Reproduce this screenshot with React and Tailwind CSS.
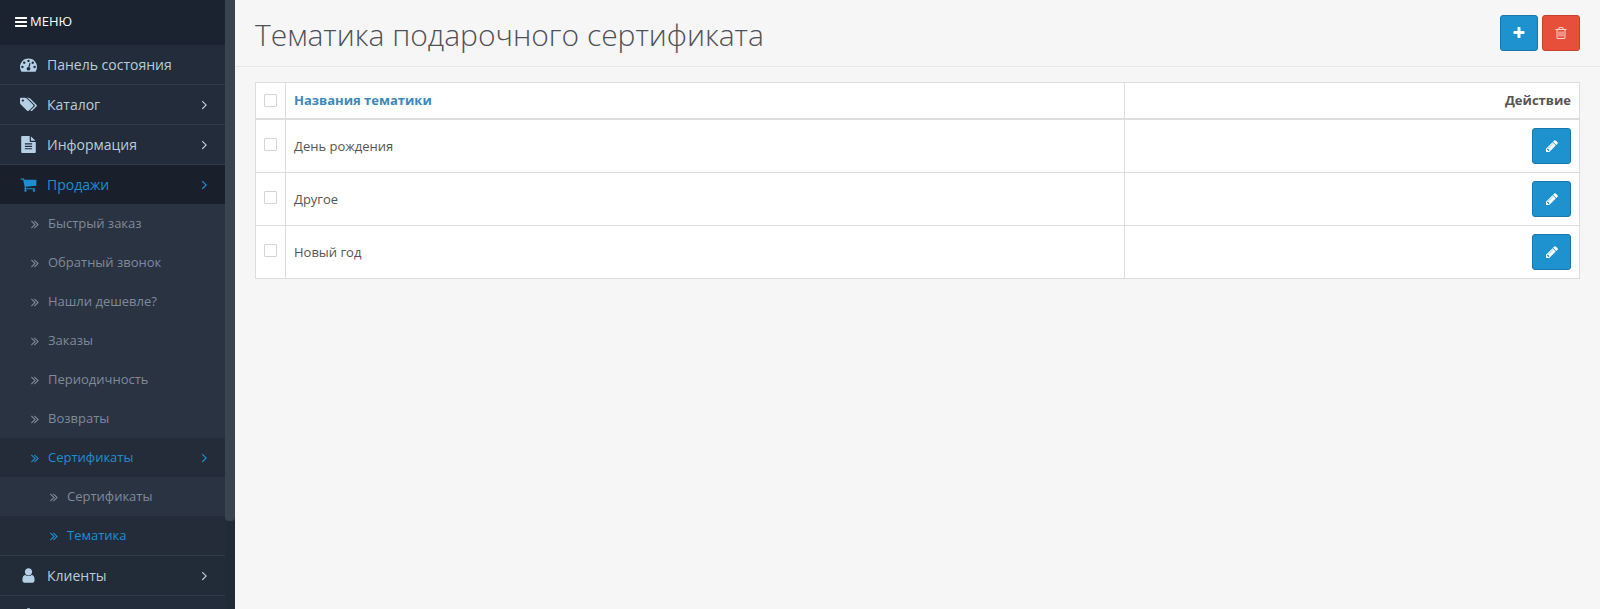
const paths = {
  bars: "M1664 1344v128q0 26-19 45t-45 19h-1408q-26 0-45-19t-19-45v-128q0-26 19-45t45-19h1408q26 0 45 19t19 45zm0-512v128q0 26-19 45t-45 19h-1408q-26 0-45-19t-19-45v-128q0-26 19-45t45-19h1408q26 0 45 19t19 45zm0-512v128q0 26-19 45t-45 19h-1408q-26 0-45-19t-19-45v-128q0-26 19-45t45-19h1408q26 0 45 19t19 45z",
  dashboard: "M384 1152q0-53-37.5-90.5t-90.5-37.5-90.5 37.5-37.5 90.5 37.5 90.5 90.5 37.5 90.5-37.5 37.5-90.5zm192-448q0-53-37.5-90.5t-90.5-37.5-90.5 37.5-37.5 90.5 37.5 90.5 90.5 37.5 90.5-37.5 37.5-90.5zm428 481l101-382q6-26-7.5-48.5t-38.5-29.5-48 6.5-30 39.5l-101 382q-60 5-107 43.5t-63 98.5q-20 77 20 146t117 89 146-20 89-117q16-60-6-117t-72-91zm660-33q0-53-37.5-90.5t-90.5-37.5-90.5 37.5-37.5 90.5 37.5 90.5 90.5 37.5 90.5-37.5 37.5-90.5zm-640-640q0-53-37.5-90.5t-90.5-37.5-90.5 37.5-37.5 90.5 37.5 90.5 90.5 37.5 90.5-37.5 37.5-90.5zm448 192q0-53-37.5-90.5t-90.5-37.5-90.5 37.5-37.5 90.5 37.5 90.5 90.5 37.5 90.5-37.5 37.5-90.5zm320 448q0 261-141 483-19 29-54 29h-1402q-35 0-54-29-141-221-141-483 0-182 71-348t191-286 286-191 348-71 348 71 286 191 191 286 71 348z",
  tags: "M448 448q0-53-37.5-90.5t-90.5-37.5-90.5 37.5-37.5 90.5 37.5 90.5 90.5 37.5 90.5-37.5 37.5-90.5zm1067 576q0 53-37 90l-491 492q-39 37-91 37-53 0-90-37l-715-716q-38-37-64.5-101t-26.5-117v-416q0-52 38-90t90-38h416q53 0 117 26.5t102 64.5l715 714q37 39 37 91zm384 0q0 53-37 90l-491 492q-39 37-91 37-36 0-59-14t-53-45l470-470q37-37 37-90 0-52-37-91l-715-714q-38-38-102-64.5t-117-26.5h224q53 0 117 26.5t102 64.5l715 714q37 39 37 91z",
  file: "M1596 476q14 14 28 36h-472v-472q22 14 36 28zm-476 164h544v1056q0 40-28 68t-68 28h-1344q-40 0-68-28t-28-68v-1600q0-40 28-68t68-28h800v544q0 40 28 68t68 28zm160 736v-64q0-14-9-23t-23-9h-704q-14 0-23 9t-9 23v64q0 14 9 23t23 9h704q14 0 23-9t9-23zm0-256v-64q0-14-9-23t-23-9h-704q-14 0-23 9t-9 23v64q0 14 9 23t23 9h704q14 0 23-9t9-23zm0-256v-64q0-14-9-23t-23-9h-704q-14 0-23 9t-9 23v64q0 14 9 23t23 9h704q14 0 23-9t9-23z",
  cart: "M704 1536q0 52-38 90t-90 38-90-38-38-90 38-90 90-38 90 38 38 90zm896 0q0 52-38 90t-90 38-90-38-38-90 38-90 90-38 90 38 38 90zm128-1088v512q0 24-16.5 42.5t-40.5 21.5l-1044 122q13 60 13 70 0 16-24 64h920q26 0 45 19t19 45-19 45-45 19h-1024q-26 0-45-19t-19-45q0-11 8-31.5t16-36 21.5-40 15.5-29.5l-177-823h-204q-26 0-45-19t-19-45 19-45 45-19h256q16 0 28.5 6.5t19.5 15.5 13 24.5 8 26 5.5 29.5 4.5 26h1201q26 0 45 19t19 45z",
  user: "M1536 1399q0 109-62.5 187t-150.5 78h-854q-88 0-150.5-78t-62.5-187q0-85 8.5-160.5t31.5-152 58.5-131 94-89 134.5-34.5q131 128 313 128t313-128q76 0 134.5 34.5t94 89 58.5 131 31.5 152 8.5 160.5zm-256-887q0 159-112.5 271.5t-271.5 112.5-271.5-112.5-112.5-271.5 112.5-271.5 271.5-112.5 271.5 112.5 112.5 271.5z",
  angle: "M1171 960q0 13-10 23l-466 466q-10 10-23 10t-23-10l-50-50q-10-10-10-23t10-23l393-393-393-393q-10-10-10-23t10-23l50-50q10-10 23-10t23 10l466 466q10 10 10 23z",
  angleDouble: "M979 960q0 13-10 23l-466 466q-10 10-23 10t-23-10l-50-50q-10-10-10-23t10-23l393-393-393-393q-10-10-10-23t10-23l50-50q10-10 23-10t23 10l466 466q10 10 10 23zm384 0q0 13-10 23l-466 466q-10 10-23 10t-23-10l-50-50q-10-10-10-23t10-23l393-393-393-393q-10-10-10-23t10-23l50-50q10-10 23-10t23 10l466 466q10 10 10 23z",
  pencil: "M491 1536l91-91-235-235-91 91v107h128v128h107zm523-928q0-22-22-22-10 0-17 7l-542 542q-7 7-7 17 0 22 22 22 10 0 17-7l542-542q7-7 7-17zm-54-192l416 416-832 832h-416v-416zm683 96q0 53-37 90l-166 166-416-416 166-165q36-38 90-38 53 0 91 38l235 234q37 39 37 91z",
  plus: "M1600 736v192q0 40-28 68t-68 28h-416v416q0 40-28 68t-68 28h-192q-40 0-68-28t-28-68v-416h-416q-40 0-68-28t-28-68v-192q0-40 28-68t68-28h416v-416q0-40 28-68t68-28h192q40 0 68 28t28 68v416h416q40 0 68 28t28 68z",
  trash: "M704 736v576q0 14-9 23t-23 9h-64q-14 0-23-9t-9-23v-576q0-14 9-23t23-9h64q14 0 23 9t9 23zm256 0v576q0 14-9 23t-23 9h-64q-14 0-23-9t-9-23v-576q0-14 9-23t23-9h64q14 0 23 9t9 23zm256 0v576q0 14-9 23t-23 9h-64q-14 0-23-9t-9-23v-576q0-14 9-23t23-9h64q14 0 23 9t9 23zm128 724v-948h-896v948q0 22 7 40.5t14.5 27 10.5 8.5h832q3 0 10.5-8.5t14.5-27 7-40.5zm-672-1076h448l-48-117q-7-9-17-11h-317q-10 2-17 11zm928 32v64q0 14-9 23t-23 9h-96v948q0 83-47 143.5t-113 60.5h-832q-66 0-113-58.5t-47-141.5v-952h-96q-14 0-23-9t-9-23v-64q0-14 9-23t23-9h309l70-167q15-37 54-63t79-26h320q40 0 79 26t54 63l70 167h309q14 0 23 9t9 23z",
  cog: "M1152 896q0-106-75-181t-181-75-181 75-75 181 75 181 181 75 181-75 75-181zm512-109v222q0 12-8 23t-20 13l-185 28q-19 54-39 91 35 50 107 138 10 12 10 25t-9 23q-27 37-99 108t-94 71q-12 0-26-9l-138-108q-44 23-91 38-16 136-29 186-7 28-36 28h-222q-14 0-24.5-8.5t-11.5-21.5l-28-184q-49-16-90-37l-141 107q-10 9-25 9-14 0-25-11-126-114-165-168-7-10-7-23 0-12 8-23 15-21 51-66.5t54-70.5q-27-50-41-99l-183-27q-13-2-21-12.5t-8-23.5v-222q0-12 8-23t19-13l186-28q14-46 39-92-40-57-107-138-10-12-10-24 0-10 9-23 26-36 98.5-107.5t94.5-71.5q13 0 26 10l138 107q44-23 91-38 16-136 29-186 7-28 36-28h222q14 0 24.5 8.5t11.5 21.5l28 184q49 16 90 37l142-107q9-9 24-9 13 0 25 10 129 119 165 170 7 8 7 22 0 12-8 23-15 21-51 66.5t-54 70.5q26 50 41 98l183 28q13 2 21 12.5t8 23.5z",
};

const Fa = ({ name, size = 14, box = "0 0 1792 1792", className = "" }) => (
  <svg viewBox={box} width={size} height={size} fill="currentColor" fillRule="evenodd" className={`shrink-0 ${className}`}>
    <path d={paths[name]} />
  </svg>
);

const MainItem = ({ icon, label, arrow, active, box, tall }) => (
  <div
    className={`flex items-center pl-[20px] pr-[13px] text-[14px] ${
      active
        ? "h-[39px] bg-[#19202b] text-[#1f8ed0]"
        : tall
          ? "h-[41px] border-y border-[#2f3a4a] bg-[#222b38] text-[#b9cdd9]"
          : "h-[40px] border-b border-[#2f3a4a] bg-[#232c3a] text-[#b9cdd9]"
    }`}
  >
    <span className={`w-[27px] ${active ? "text-[#1f8ed0]" : "text-[#b5d0e6]"}`}>
      <Fa name={icon} size={17} box={box} />
    </span>
    <span className="flex-1">{label}</span>
    {arrow && <Fa name="angle" size={15} />}
  </div>
);

const SubItem = ({ label, arrow, active, level = 1 }) => (
  <div
    className={`flex items-center h-[39px] pr-[13px] text-[13px] ${level === 2 ? "pl-[47px]" : "pl-[28px]"} ${
      active ? "text-[#1f8ed0]" : "text-[#7f8a99]"
    } ${active ? "bg-[#232c38]" : "bg-[#2a3342]"}`}
  >
    <Fa name="angleDouble" size={14} className="mr-[6px]" />
    <span className="flex-1">{label}</span>
    {arrow && <Fa name="angle" size={15} />}
  </div>
);

const rows = ["День рождения", "Другое", "Новый год"];

const Checkbox = () => <span className="block w-[13px] h-[13px] border border-[#d5d5d5] bg-white rounded-[1px]" />;

export default function App() {
  return (
    <div className="flex h-[609px] overflow-hidden bg-[#f6f6f6] font-['Open_Sans',sans-serif]">
      <aside className="flex w-[235px] shrink-0 bg-[#212a37]">
        <div className="w-[225px] shrink-0">
          <div className="flex items-center h-[45px] pl-[14px] pb-[1px] bg-[#1b2331] text-white text-[13px] gap-[2px]">
            <Fa name="bars" size={14} />
            МЕНЮ
          </div>
          <MainItem icon="dashboard" label="Панель состояния" />
          <MainItem icon="tags" box="0 0 1920 1792" label="Каталог" arrow />
          <MainItem icon="file" label="Информация" arrow />
          <MainItem icon="cart" label="Продажи" arrow active />
          <SubItem label="Быстрый заказ" />
          <SubItem label="Обратный звонок" />
          <SubItem label="Нашли дешевле?" />
          <SubItem label="Заказы" />
          <SubItem label="Периодичность" />
          <SubItem label="Возвраты" />
          <SubItem label="Сертификаты" arrow active />
          <SubItem label="Сертификаты" level={2} />
          <SubItem label="Тематика" level={2} active />
          <MainItem icon="user" label="Клиенты" arrow tall />
          <MainItem icon="cog" label="" />
        </div>
        <div className="w-[10px] h-[521px] bg-[#3a4350] rounded-b-[4px]" />
      </aside>
      <main className="flex-1 min-w-0">
        <header className="flex items-center justify-between h-[67px] pl-[20px] pr-[20px] border-b border-[#e8e8e8]">
          <h1 className="pt-[2px] text-[30px] font-light text-[#4d5159]">Тематика подарочного сертификата</h1>
          <div className="flex gap-[4px]">
            <button className="flex items-center justify-center w-[38px] h-[36px] rounded-[3px] bg-[#1e91cf] border border-[#1978ab] text-white">
              <Fa name="plus" size={14} />
            </button>
            <button className="flex items-center justify-center w-[38px] h-[36px] rounded-[3px] bg-[#e74f3b] border border-[#c9402e] text-[#f9d5d0]">
              <Fa name="trash" size={14} />
            </button>
          </div>
        </header>
        <div className="pt-[15px] px-[20px]">
          <table className="w-full border-collapse bg-white text-[13px] text-[#555]">
            <thead>
              <tr className="h-[36px]">
                <th className="w-[30px] border border-[#ddd] border-b-2 pl-[8px]"><Checkbox /></th>
                <th className="w-[839px] border border-[#ddd] border-b-2 pl-[8px] text-left font-bold text-[13px] text-[#3b88bd]">Названия тематики</th>
                <th className="border border-[#ddd] border-b-2 pr-[8px] text-right font-bold text-[13px] text-[#555]">Действие</th>
              </tr>
            </thead>
            <tbody>
              {rows.map((name, i) => (
                <tr key={name} className={i === 0 ? "h-[54px]" : "h-[53px]"}>
                  <td className="border border-[#ddd] pl-[8px] align-top pt-[18px]"><Checkbox /></td>
                  <td className="border border-[#ddd] pl-[8px] pt-[1px]">{name}</td>
                  <td className="border border-[#ddd] pr-[8px]">
                    <div className="flex justify-end">
                      <button className="flex items-center justify-center w-[39px] h-[36px] rounded-[3px] bg-[#1e91cf] border border-[#1978ab] text-white">
                        <Fa name="pencil" size={14} />
                      </button>
                    </div>
                  </td>
                </tr>
              ))}
            </tbody>
          </table>
        </div>
      </main>
    </div>
  );
}
